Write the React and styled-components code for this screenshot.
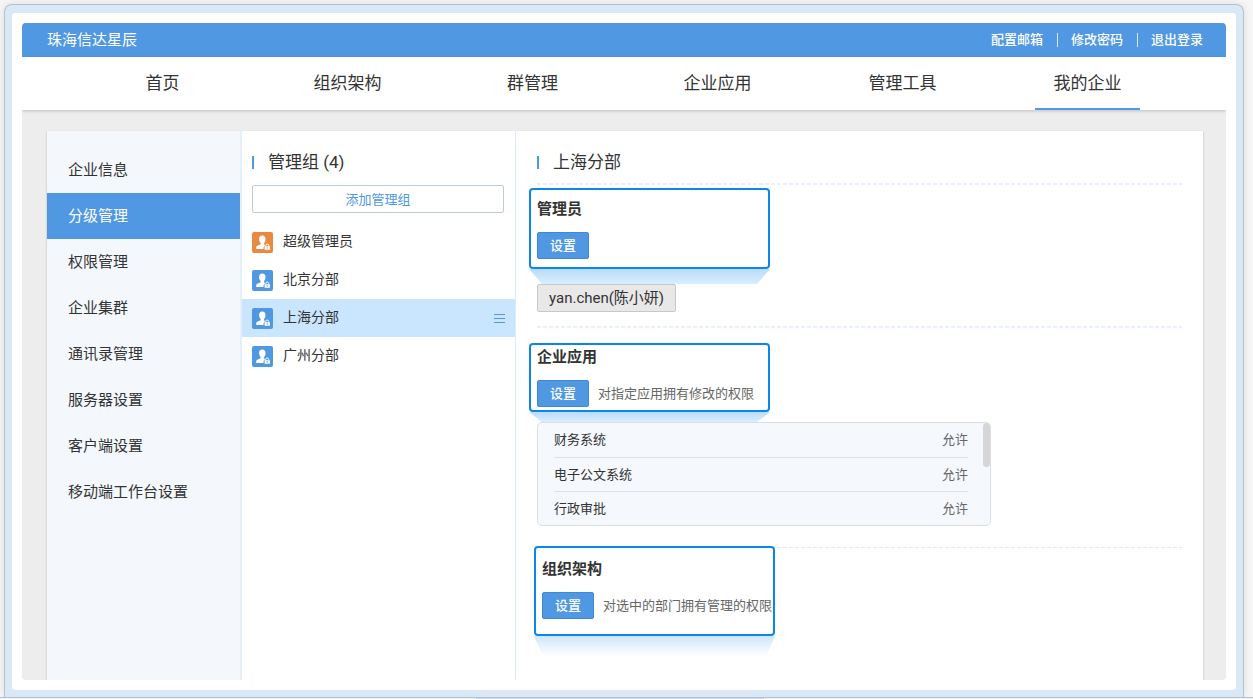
import React from "react";
import styled, { createGlobalStyle } from "styled-components";

const Global = createGlobalStyle`
  * { box-sizing: border-box; }
  body {
    margin: 0;
    background: #f6f6f6;
    color: #333;
    font-family: Roboto, "Noto Sans CJK SC", sans-serif;
    font-size: 15px;
  }
  button { font-family: inherit; cursor: pointer; }
  a { color: inherit; text-decoration: none; }
  h1, h2, h3, p, ul { margin: 0; padding: 0; font-weight: 400; }
  ul { list-style: none; }
`;

const Page = styled.div`
  display: flex;
  flex-direction: column;
  min-height: 100vh;
  padding: 4px 9px 0 4px;
`;

const Frame = styled.div`
  flex: 1;
  display: flex;
  padding: 8px 7px 7px;
  background: #dae8f5;
  border: 1px solid #b2c2d2;
  border-bottom: 0;
  border-radius: 8px 8px 0 0;
  box-shadow: 0 0 8px rgba(0, 0, 0, 0.1);
`;

const FrameInner = styled.div`
  flex: 1;
  display: flex;
  padding: 10px;
  background: #fff;
  border-radius: 4px;
`;

const Shelf = styled.div`
  height: 2px;
  margin: 0 -9px 0 -4px;
  border-top: 1px solid #b2c2d2;
  background: linear-gradient(90deg, #f0f2f4 38%, #cdd8e4 38%, #cdd8e4 61%, #f0f2f4 61%);
`;

const Shell = styled.div`
  flex: 1;
  display: flex;
  flex-direction: column;
  overflow: hidden;
  border-radius: 4px;
  background: #ededed;
`;

const TopBar = styled.header`
  display: flex;
  align-items: center;
  justify-content: space-between;
  height: 34px;
  padding: 0 23px 0 25px;
  background: #5098e2;
  color: #fff;
`;

const Brand = styled.h1`
  font-size: 15px;
  line-height: 22px;
`;

const TopLinks = styled.div`
  display: flex;
`;

const TopLink = styled.a`
  padding-left: 13px;
  font-size: 13px;
  font-weight: 500;
  line-height: 14px;

  & + & {
    margin-left: 14px;
    border-left: 1px solid #d6e7f9;
  }
`;

const Nav = styled.nav`
  display: flex;
  height: 53px;
  padding: 0 46px 0 48px;
  background: #fff;
  box-shadow: 0 1px 3px rgba(0, 0, 0, 0.2);
`;

const NavItem = styled.div`
  flex: 1;
  display: flex;
  justify-content: center;
`;

const NavLink = styled.a`
  width: 105px;
  border-bottom: 2px solid ${(p) => (p.$active ? "#5098e2" : "transparent")};
  font-size: 17px;
  line-height: 53px;
  text-align: center;
`;

const Panel = styled.main`
  flex: 1;
  display: flex;
  margin: 21px 23px 0 25px;
  background: #fff;
  box-shadow: 0 1px 2px rgba(0, 0, 0, 0.25);
`;

const Sidebar = styled.aside`
  width: 195px;
  padding-top: 16px;
  background: #f4f8fd;
  border-right: 2px solid #e4eff9;
`;

const SideLink = styled.a`
  display: block;
  padding-left: 21px;
  font-size: 15px;
  line-height: 46px;
  background: ${(p) => (p.$active ? "#5098e2" : "transparent")};
  color: ${(p) => (p.$active ? "#fff" : "#333")};
`;

const Groups = styled.section`
  width: 274px;
  border-right: 1px solid #dcebf9;
`;

const Heading = styled.h2`
  display: flex;
  align-items: center;
  gap: 14px;
  padding-top: 18px;
  font-size: 17px;
  line-height: 26px;

  &::before {
    content: "";
    width: 2px;
    height: 13px;
    background: #5098e2;
  }
`;

const GroupsHead = styled.div`
  padding: 0 11px 10px 10px;
`;

const AddButton = styled.button`
  width: 100%;
  height: 28px;
  margin-top: 10px;
  padding: 0 0 2px;
  background: #fff;
  border: 1px solid #bccbe2;
  border-radius: 2px;
  color: #5098e2;
  font-size: 13px;
`;

const GroupRow = styled.li`
  display: flex;
  align-items: center;
  height: 38px;
  padding: 0 10px;
  background: ${(p) => (p.$active ? "#cae6ff" : "transparent")};
`;

const GroupLink = styled.a`
  flex: 1;
  display: flex;
  align-items: center;
  gap: 10px;
  font-size: 14px;
  line-height: 20px;
`;

const GroupName = styled.span`
  padding-bottom: 2px;
`;

const MenuButton = styled.button`
  display: flex;
  padding: 0;
  border: 0;
  background: none;
`;

const Detail = styled.section`
  flex: 1;
  padding: 0 21px;
`;

const DetailHead = styled.div`
  padding-bottom: 8px;
`;

const Divider = styled.div`
  height: ${(p) => (p.$thin ? 1 : 2)}px;
  background: repeating-linear-gradient(90deg, ${(p) => (p.$thin ? "#dcebfb" : "#e8f1fb")} 0 4px, transparent 4px 6px);
`;

const Callout = styled.div`
  position: relative;
  width: 241px;
  margin-left: ${(p) => (p.$inset ? -3 : -8)}px;
`;

const CalloutBox = styled.div`
  border: 2px solid #0d86ea;
  border-radius: 4px;
  background: #fff;
`;

const AdminCallout = styled(Callout)`
  margin-top: 3px;
  ${CalloutBox} { padding: 8px 6px; }
`;

const AppsCallout = styled(Callout)`
  margin-top: 15px;
  ${CalloutBox} { padding: 1px 6px 3px; }
`;

const OrgCallout = styled(Callout)`
  margin-top: -2px;
  ${CalloutBox} { padding: 10px 6px 15px; }
`;

const Beam = styled.div`
  height: ${(p) => p.$height}px;
  background: linear-gradient(${(p) => (p.$fade ? "#cde5fa, #fff" : "#b9dcf9, #daeeff")});
  clip-path: polygon(0 0, 100% 0, calc(100% - ${(p) => p.$slant}px) 100%, ${(p) => p.$slant}px 100%);
`;

const BoxTitle = styled.h3`
  font-size: 15px;
  font-weight: 700;
  line-height: 22px;
`;

const SetRow = styled.div`
  display: flex;
  align-items: center;
  gap: 9px;
  margin-top: 12px;
  color: #666;
  font-size: 13px;
  white-space: nowrap;
`;

const Hint = styled.p`
  padding-bottom: 2px;
`;

const SetButton = styled.button`
  flex: none;
  width: 52px;
  height: 27px;
  padding: 0 0 2px;
  background: #5098e2;
  border: 1px solid #3f88d6;
  border-radius: 2px;
  color: #fff;
  font-size: 13px;
  font-weight: 500;
`;

const Tag = styled.span`
  display: block;
  width: fit-content;
  margin-bottom: 14px;
  padding: 0 11px;
  border: 1px solid #c8c8c8;
  border-radius: 2px;
  background: #e8e8e8;
  font-size: 15px;
  line-height: 26px;
`;

const AppBox = styled.div`
  position: relative;
  width: 454px;
  margin-bottom: 21px;
  padding: 0 22px 0 16px;
  border: 1px solid #dcdee2;
  border-radius: 5px;
  background: #f5f9fe;
`;

const AppTable = styled.table`
  width: 100%;
  border-collapse: collapse;
  font-size: 13px;

  td {
    height: 34px;
    padding: 0 0 2px;
  }
  td:last-child {
    text-align: right;
    color: #666;
  }
  tr + tr td { border-top: 1px solid #dddfe4; }
`;

const Thumb = styled.div`
  position: absolute;
  top: 0;
  right: 0;
  width: 7px;
  height: 44px;
  border-radius: 4px;
  background: #d6d6d6;
`;

function Avatar({ color }) {
  return (
    <svg width="21" height="21" viewBox="0 0 21 21" aria-hidden="true">
      <rect width="21" height="21" rx="2" fill={color} />
      <path
        d="M10.200 3.600c2.100 0 3.300 1.400 3.300 3.600 0 1.600-.6 2.900-1.400 3.700v1.500l1 .5c-.5.4-.8 1-.8 1.600-.5.200-.8.7-.8 1.200v1.200H4.200v-1.300c0-1.100.6-1.700 1.700-2.100l2.700-1.200v-1.400C7.600 10 7.100 8.800 7.100 7.200c0-2.200 1.100-3.600 3.100-3.600z"
        fill="#fff"
      />
      <path d="M13.700 14.500v-1a1.500 1.500 0 0 1 3 0v1" fill="none" stroke="#fff" strokeWidth="1" />
      <path d="M12.600 14.200h5.300v3.500h-5.300zM14.700 15.300v1.200h1.100v-1.200z" fill="#fff" fillRule="evenodd" />
    </svg>
  );
}

const topLinks = ["配置邮箱", "修改密码", "退出登录"];
const navItems = ["首页", "组织架构", "群管理", "企业应用", "管理工具", "我的企业"];
const sideItems = [
  "企业信息",
  "分级管理",
  "权限管理",
  "企业集群",
  "通讯录管理",
  "服务器设置",
  "客户端设置",
  "移动端工作台设置",
];
const groups = ["超级管理员", "北京分部", "上海分部", "广州分部"];
const apps = ["财务系统", "电子公文系统", "行政审批"];

export default function App() {
  return (
    <>
      <Global />
      <Page>
        <Frame>
          <FrameInner>
            <Shell>
              <TopBar>
                <Brand>珠海信达星辰</Brand>
                <TopLinks>
                  {topLinks.map((t) => (
                    <TopLink href="#" key={t}>{t}</TopLink>
                  ))}
                </TopLinks>
              </TopBar>
              <Nav>
                {navItems.map((t) => (
                  <NavItem key={t}>
                    <NavLink href="#" $active={t === "我的企业"}>{t}</NavLink>
                  </NavItem>
                ))}
              </Nav>
              <Panel>
                <Sidebar>
                  {sideItems.map((t) => (
                    <SideLink href="#" key={t} $active={t === "分级管理"}>{t}</SideLink>
                  ))}
                </Sidebar>
                <Groups>
                  <GroupsHead>
                    <Heading>管理组 (4)</Heading>
                    <AddButton type="button">添加管理组</AddButton>
                  </GroupsHead>
                  <ul>
                    {groups.map((t, i) => (
                      <GroupRow key={t} $active={i === 2}>
                        <GroupLink href="#">
                          <Avatar color={i === 0 ? "#e88a42" : "#5098e2"} />
                          <GroupName>{t}</GroupName>
                        </GroupLink>
                        {i === 2 && (
                          <MenuButton type="button" aria-label="菜单">
                            <svg width="12" height="11" viewBox="0 0 12 11">
                              <path d="M1 1.500h11M1 5.500h11M1 9.500h11" stroke="#5098e2" />
                            </svg>
                          </MenuButton>
                        )}
                      </GroupRow>
                    ))}
                  </ul>
                </Groups>
                <Detail>
                  <DetailHead>
                    <Heading>上海分部</Heading>
                  </DetailHead>
                  <Divider />
                  <AdminCallout>
                    <CalloutBox>
                      <BoxTitle>管理员</BoxTitle>
                      <SetRow>
                        <SetButton type="button">设置</SetButton>
                      </SetRow>
                    </CalloutBox>
                    <Beam $height={15} $slant={13} />
                  </AdminCallout>
                  <Tag>yan.chen(陈小妍)</Tag>
                  <Divider />
                  <AppsCallout>
                    <CalloutBox>
                      <BoxTitle>企业应用</BoxTitle>
                      <SetRow>
                        <SetButton type="button">设置</SetButton>
                        <Hint>对指定应用拥有修改的权限</Hint>
                      </SetRow>
                    </CalloutBox>
                    <Beam $height={10} $slant={13} />
                  </AppsCallout>
                  <AppBox>
                    <AppTable>
                      <tbody>
                        {apps.map((t) => (
                          <tr key={t}>
                            <td>{t}</td>
                            <td>允许</td>
                          </tr>
                        ))}
                      </tbody>
                    </AppTable>
                    <Thumb />
                  </AppBox>
                  <Divider $thin />
                  <OrgCallout $inset>
                    <CalloutBox>
                      <BoxTitle>组织架构</BoxTitle>
                      <SetRow>
                        <SetButton type="button">设置</SetButton>
                        <Hint>对选中的部门拥有管理的权限</Hint>
                      </SetRow>
                    </CalloutBox>
                    <Beam $height={20} $slant={9} $fade />
                  </OrgCallout>
                </Detail>
              </Panel>
            </Shell>
          </FrameInner>
        </Frame>
        <Shelf />
      </Page>
    </>
  );
}
